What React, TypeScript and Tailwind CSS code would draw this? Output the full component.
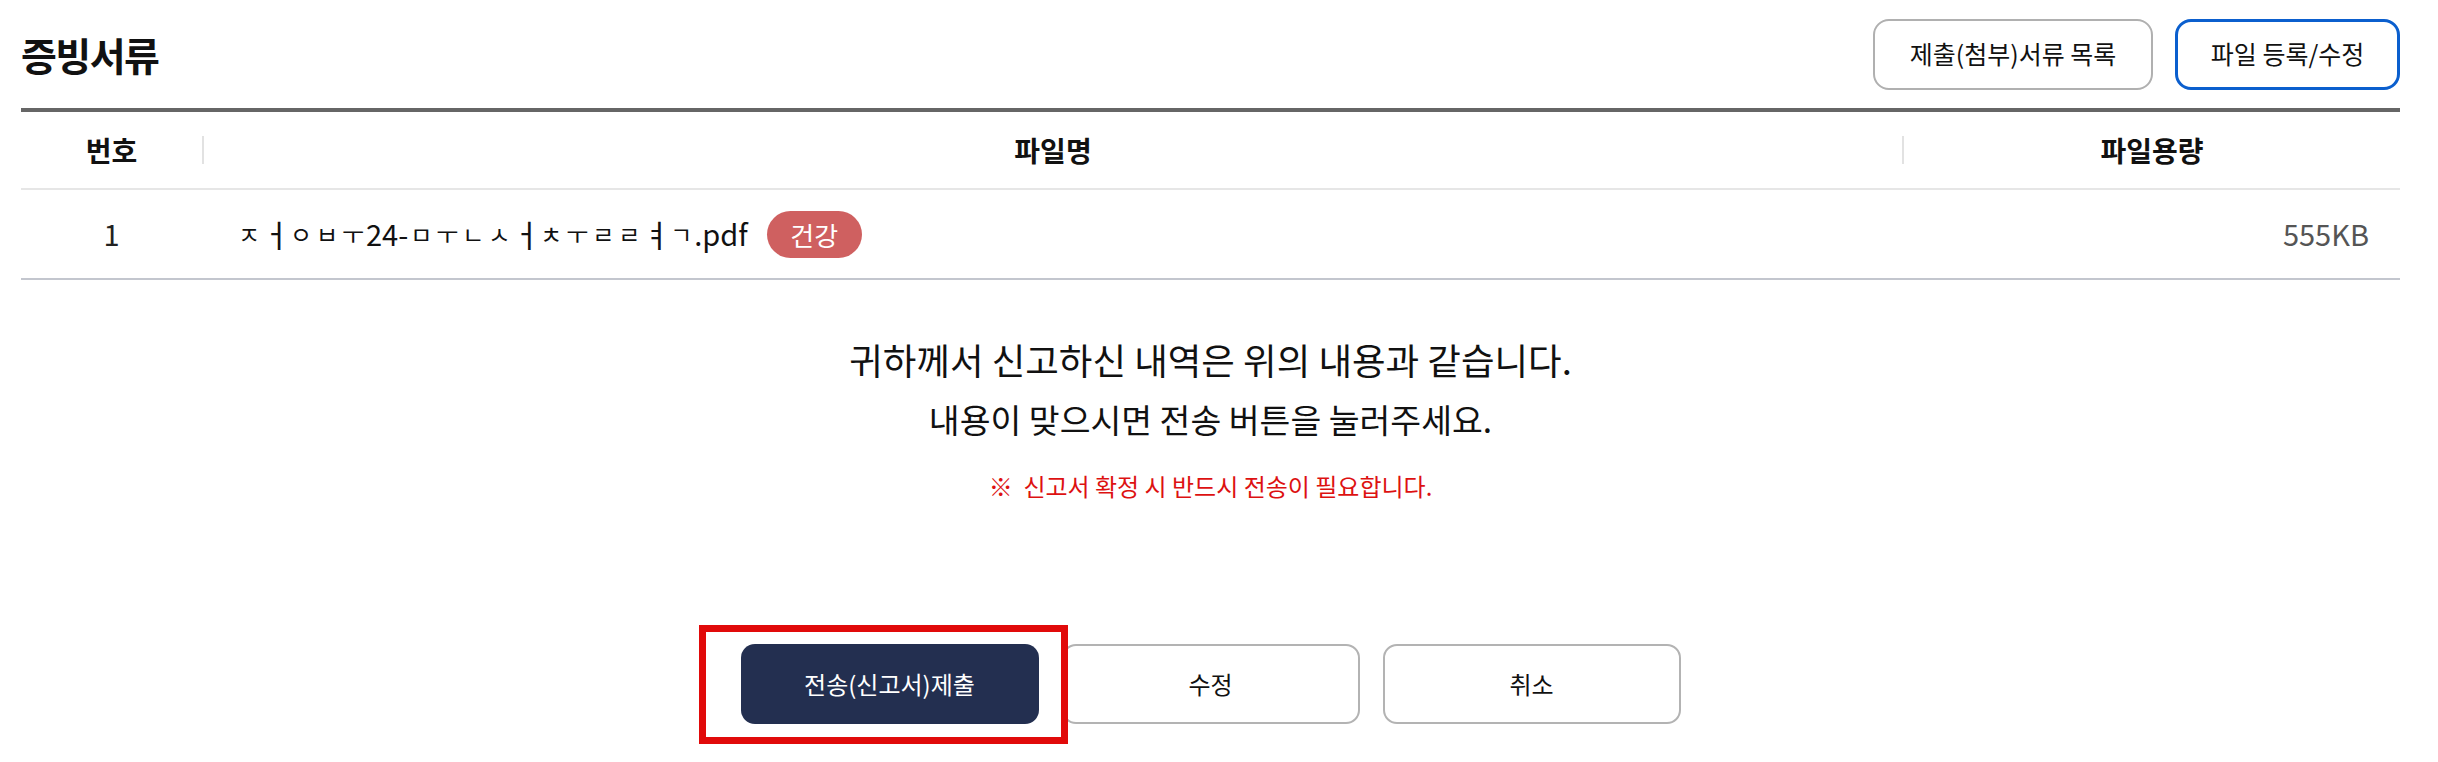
import React from "react";

// 파일명이 자모 분리(NFD) 상태로 저장되어 낱자로 보이는 경우
const FILE_PARTS: string[] = [
  "ㅈ", "ㅓ", "ㅇ", "ㅂ", "ㅜ", "24-", "ㅁ", "ㅜ", "ㄴ", "ㅅ", "ㅓ", "ㅊ", "ㅜ", "ㄹ", "ㄹ", "ㅕ", "ㄱ", ".pdf",
];

const TALL_VOWELS = ["ㅓ", "ㅕ"];

function JamoName({ parts }: { parts: string[] }) {
  return (
    <span className="inline-flex items-center">
      {parts.map((c, i) =>
        /^[\u3131-\u318e]$/.test(c) ? (
          <span
            key={i}
            className={`inline-block w-[26px] text-center ${TALL_VOWELS.includes(c) ? "text-[31px]" : "text-[24px]"}`}
          >
            {c}
          </span>
        ) : (
          <span key={i}>{c}</span>
        )
      )}
    </span>
  );
}

const App = () => {
  return (
    <div className="min-h-screen bg-white font-['Noto_Sans_CJK_KR','Noto_Sans',sans-serif] text-[#111]">
      <div className="ml-[21px] w-[2379px]">
        {/* 제목 + 상단 버튼 */}
        <div className="flex h-[108px] items-center justify-between">
          <h2 className="text-[39px] font-bold tracking-[-0.04em]">증빙서류</h2>
          <div className="flex gap-[22px]">
            <button className="h-[71px] w-[280px] rounded-[16px] border-2 border-[#b0b0b0] bg-white text-[25px]">
              제출(첨부)서류 목록
            </button>
            <button className="h-[71px] w-[225px] rounded-[16px] border-[3px] border-[#0b5fce] bg-white text-[25px]">
              파일 등록/수정
            </button>
          </div>
        </div>

        {/* 테이블 */}
        <div className="border-t-4 border-[#666]">
          <div className="grid h-[78px] grid-cols-[181px_1700px_498px] border-b-2 border-[#e6e6e6] text-[28px] font-bold">
            <div className="flex items-center justify-center">번호</div>
            <div className="flex items-center">
              <div className="h-[28px] w-[2px] bg-[#e2e2e2]"></div>
              <div className="flex-1 text-center">파일명</div>
            </div>
            <div className="flex items-center">
              <div className="h-[28px] w-[2px] bg-[#e2e2e2]"></div>
              <div className="flex-1 text-center">파일용량</div>
            </div>
          </div>
          <div className="grid h-[90px] grid-cols-[181px_1700px_498px] border-b-2 border-[#c3c6ce] text-[29px]">
            <div className="flex items-center justify-center text-[#222]">1</div>
            <div className="flex items-center pl-[34px] text-[#111]">
              <JamoName parts={FILE_PARTS} />
              <span className="ml-[19px] flex h-[47px] w-[95px] items-center justify-center rounded-full bg-[#cf6060] text-[26px] text-white">
                건강
              </span>
            </div>
            <div className="flex items-center justify-end pr-[31px] text-[#555]">555KB</div>
          </div>
        </div>

        {/* 안내 문구 */}
        <div className="mt-[50px] text-center">
          <p className="text-[36.5px] leading-[59px]">귀하께서 신고하신 내역은 위의 내용과 같습니다.</p>
          <p className="text-[33.5px] leading-[59px]">내용이 맞으시면 전송 버튼을 눌러주세요.</p>
          <p className="mt-[22px] text-[24px] leading-[32px] text-[#dd1111]">
            ※&nbsp; 신고서 확정 시 반드시 전송이 필요합니다.
          </p>
        </div>

        {/* 하단 버튼 */}
        <div className="mt-[142px] flex justify-center gap-[23px]">
          <div className="relative">
            <button className="h-[80px] w-[298px] rounded-[14px] bg-[#232f50] text-[24px] text-white">
              전송(신고서)제출
            </button>
            <span className="pointer-events-none absolute -left-[42px] -top-[19px] z-10 h-[119px] w-[369px] border-[7px] border-[#e10a0a]"></span>
          </div>
          <button className="h-[80px] w-[298px] rounded-[14px] border-2 border-[#b3b3b3] bg-white text-[24px]">
            수정
          </button>
          <button className="h-[80px] w-[298px] rounded-[14px] border-2 border-[#b3b3b3] bg-white text-[24px]">
            취소
          </button>
        </div>
      </div>
    </div>
  );
};

export default App;
